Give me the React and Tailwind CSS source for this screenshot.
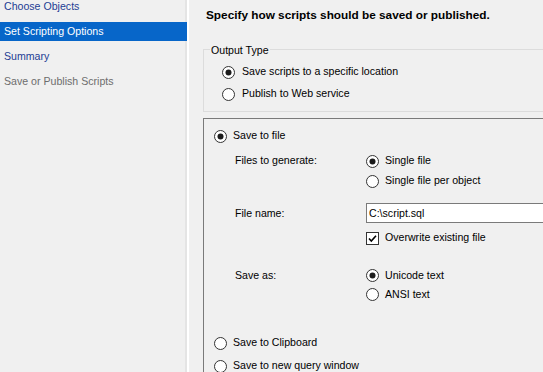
import React from 'react';

const Radio = ({ checked }) => (
  <svg width="13" height="13" viewBox="0 0 13 13" className="shrink-0">
    <circle cx="6.5" cy="6.5" r="6" fill="#fff" stroke="#333" />
    {checked && <circle cx="6.5" cy="6.5" r="3" fill="#1b1b1b" />}
  </svg>
);

const Option = ({ checked, label, className = '' }) => (
  <div className={`flex items-center gap-[6px] ${className}`}>
    <Radio checked={checked} />
    <span>{label}</span>
  </div>
);

const Checkbox = ({ checked }) => (
  <svg width="13" height="13" viewBox="0 0 13 13" className="shrink-0">
    <rect x="0.5" y="0.5" width="12" height="12" fill="#fff" stroke="#333" />
    {checked && <path d="M3 6.5 L5.3 9 L10 3.8" fill="none" stroke="#000" strokeWidth="1.6" />}
  </svg>
);

const App = () => {
  const steps = [
    { label: 'Choose Objects', state: 'link' },
    { label: 'Set Scripting Options', state: 'active' },
    { label: 'Summary', state: 'link' },
    { label: 'Save or Publish Scripts', state: 'disabled' },
  ];

  return (
    <div
      className="w-[543px] h-[372px] overflow-hidden flex bg-[#f0f0f0] text-[10.6px] text-black"
      style={{ fontFamily: '"Liberation Sans", Arial, sans-serif' }}
    >
      {/* Left - wizard steps */}
      <div className="w-[187px] shrink-0 shadow-[inset_-2px_0_0_#e4e4e4]">
        <div className="-mt-[3px] flex flex-col gap-[6px]">
          {steps.map((step) => (
            <div
              key={step.label}
              className={
                step.state === 'active'
                  ? 'h-[19px] pl-[4px] pt-[1px] flex items-center bg-[#0766c9] text-white'
                  : step.state === 'link'
                  ? 'h-[19px] pl-[4px] pt-[1px] flex items-center text-[#1d3d94]'
                  : 'h-[19px] pl-[4px] pt-[1px] flex items-center text-[#6d6d6d]'
              }
            >
              {step.label}
            </div>
          ))}
        </div>
      </div>
      <div className="w-[2px] shrink-0 bg-white"></div>

      {/* Right - options */}
      <div className="flex-1 overflow-hidden">
        <div className="h-[30px] pl-[17px] pt-[2px] flex items-center font-bold text-[11.8px]">
          Specify how scripts should be saved or published.
        </div>

        {/* Output Type group */}
        <div className="relative ml-[14px] mt-[19px] w-[400px] border border-[#dcdcdc] pt-[11px] pb-[6px] pl-[18px]">
          <span className="absolute left-[6px] -top-[6px] px-[1px] leading-[13px] bg-[#f0f0f0]">Output Type</span>
          <Option checked label="Save scripts to a specific location" className="h-[22px] gap-[7px]" />
          <Option label="Publish to Web service" className="h-[22px] gap-[7px]" />
        </div>

        {/* Save options panel */}
        <div className="ml-[14px] mt-[6px] w-[400px] h-[300px] border-l border-t border-[#7a7a7a] pt-[6px]">
          <Option checked label="Save to file" className="h-[22px] pl-[10px]" />

          <div className="flex mt-[4px]">
            <div className="w-[162px] pl-[31px] h-[20px] flex items-center">Files to generate:</div>
            <div className="flex flex-col">
              <Option checked label="Single file" className="h-[20px]" />
              <Option label="Single file per object" className="h-[20px]" />
            </div>
          </div>

          <div className="flex mt-[12px]">
            <div className="w-[162px] pl-[31px] h-[20px] pt-[1px] flex items-center">File name:</div>
            <div className="flex-1 h-[20px] border border-[#7a7a7a] bg-white pl-[2px] pt-[1px] flex items-center">
              C:\script.sql
            </div>
          </div>
          <div className="flex mt-[5px]">
            <div className="w-[162px]"></div>
            <div className="h-[20px] flex items-center gap-[6px]">
              <Checkbox checked />
              <span>Overwrite existing file</span>
            </div>
          </div>

          <div className="flex mt-[18px]">
            <div className="w-[162px] pl-[31px] h-[20px] flex items-center">Save as:</div>
            <div className="flex flex-col">
              <Option checked label="Unicode text" className="h-[19px]" />
              <Option label="ANSI text" className="h-[19px]" />
            </div>
          </div>

          <Option label="Save to Clipboard" className="h-[22px] pl-[10px] mt-[28px]" />
          <Option label="Save to new query window" className="h-[22px] pl-[10px] mt-[1px]" />
        </div>
      </div>
    </div>
  );
};

export default App;
